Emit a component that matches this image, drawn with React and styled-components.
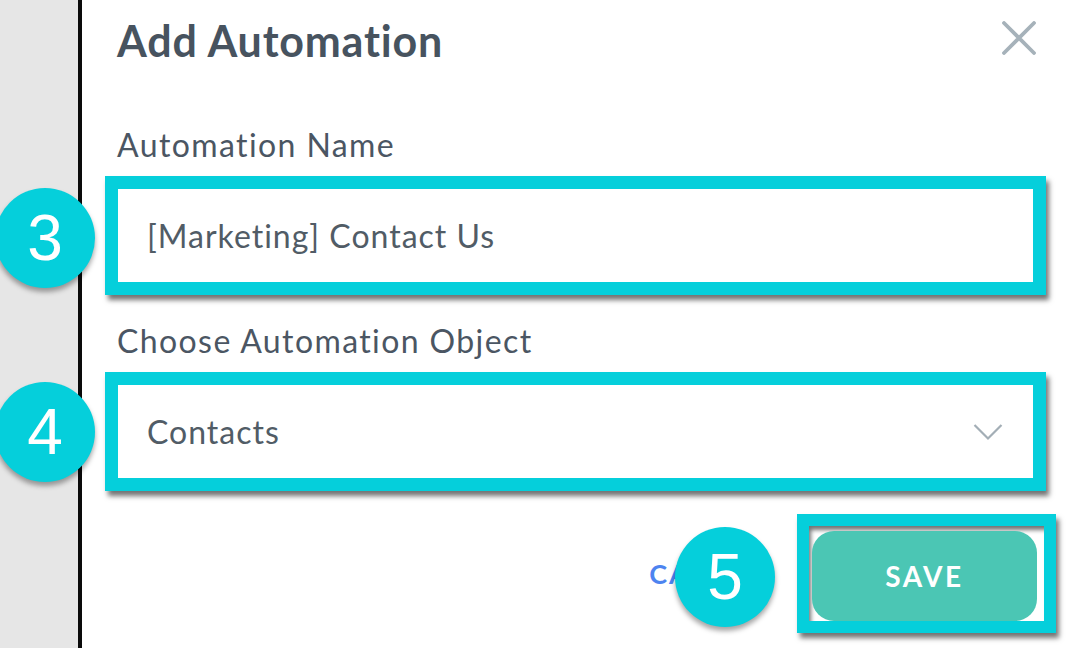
import React from 'react'
import styled, { createGlobalStyle } from 'styled-components'

const GlobalStyle = createGlobalStyle`
  html, body {
    margin: 0;
    padding: 0;
    background: #ffffff;
    overflow: hidden;
  }
  body {
    font-family: Lato, "Open Sans", sans-serif;
    font-variant-ligatures: none;
  }
`

const CYAN = '#05cfdb'

const Page = styled.div`
  display: flex;
  width: 1066px;
  height: 648px;
  overflow: hidden;
`

const Gutter = styled.div`
  width: 78px;
  flex: 0 0 auto;
  background: #e6e6e6;
`

const Rule = styled.div`
  width: 4px;
  flex: 0 0 auto;
  background: #0a0a0a;
`

const Panel = styled.div`
  flex: 1;
  padding: 15px 33px 0 37px;
  background: #ffffff;
`

const Header = styled.div`
  display: flex;
  justify-content: space-between;
  align-items: center;
`

const Title = styled.h2`
  margin: 0 0 0 -2px;
  font-size: 43px;
  line-height: 52px;
  font-weight: 700;
  letter-spacing: 0.8px;
  color: #47535f;
`

const Close = styled.button`
  display: flex;
  margin: -6px -3px 0 0;
  padding: 0;
  border: 0;
  background: none;
`

const Label = styled.div`
  margin-top: ${({ gap }) => gap}px;
  margin-left: -2px;
  font-size: 32px;
  line-height: 38px;
  letter-spacing: 1.4px;
  color: #4b5663;
`

const Frame = styled.div`
  position: relative;
  margin: 12px -13px 0 -14px;
  border: 13px solid ${CYAN};
  box-shadow: 3px 5px 5px rgba(0, 0, 0, 0.55),
    inset 3px 5px 4px -1px rgba(0, 0, 0, 0.55);
`

const Field = styled.div`
  display: flex;
  align-items: center;
  justify-content: space-between;
  height: 93px;
  padding: 0 30px 0 29px;
  background: #ffffff;
  font-size: 32px;
  letter-spacing: 1px;
  color: #515c66;
`

const Badge = styled.div`
  position: absolute;
  z-index: 2;
  left: ${({ x }) => x}px;
  top: ${({ y }) => y}px;
  width: 100px;
  height: 100px;
  border-radius: 50%;
  background: ${CYAN};
  box-shadow: 0 4px 5px rgba(0, 0, 0, 0.35);
  display: flex;
  align-items: center;
  justify-content: center;
  font-family: "Liberation Sans", Arial, sans-serif;
  font-size: 64px;
  color: #ffffff;
`

const Footer = styled.div`
  display: flex;
  justify-content: flex-end;
  align-items: center;
  gap: 31px;
  margin: 23px -23px 0 0;
`

const Cancel = styled.span`
  font-size: 27px;
  font-weight: 700;
  letter-spacing: 2px;
  color: #4d84f0;
`

const SaveFrame = styled(Frame)`
  margin: 0;
  border-width: 12px;
  padding: 5px 7px 0 3px;
  background: #ffffff;
`

const SaveButton = styled.button`
  display: block;
  width: 225px;
  height: 90px;
  border: 0;
  border-radius: 22px;
  background: #4bc6b4;
  font-family: Lato, sans-serif;
  font-size: 28px;
  font-weight: 700;
  letter-spacing: 2.5px;
  color: #ffffff;
`

const CloseIcon = () => (
  <svg width="34" height="34" viewBox="0 0 34 34">
    <path
      d="M2 2 L32 32 M32 2 L2 32"
      stroke="#a6b2ba"
      strokeWidth="3.8"
      strokeLinecap="round"
    />
  </svg>
)

const Chevron = () => (
  <svg width="30" height="18" viewBox="0 0 30 18">
    <path
      d="M1.5 2 L15 15.5 L28.5 2"
      fill="none"
      stroke="#a3aeb6"
      strokeWidth="2.2"
    />
  </svg>
)

const App = () => (
  <>
    <GlobalStyle />
    <Page>
      <Gutter />
      <Rule />
      <Panel>
        <Header>
          <Title>Add Automation</Title>
          <Close aria-label="close">
            <CloseIcon />
          </Close>
        </Header>

        <Label gap={59}>Automation Name</Label>
        <Frame>
          <Badge x={-123} y={-1}>3</Badge>
          <Field>[Marketing] Contact Us</Field>
        </Frame>

        <Label gap={27}>Choose Automation Object</Label>
        <Frame>
          <Badge x={-123} y={-3}>4</Badge>
          <Field>
            Contacts
            <Chevron />
          </Field>
        </Frame>

        <Footer>
          <Cancel>CANCEL</Cancel>
          <SaveFrame>
            <Badge x={-134} y={1}>5</Badge>
            <SaveButton>SAVE</SaveButton>
          </SaveFrame>
        </Footer>
      </Panel>
    </Page>
  </>
)

export default App
